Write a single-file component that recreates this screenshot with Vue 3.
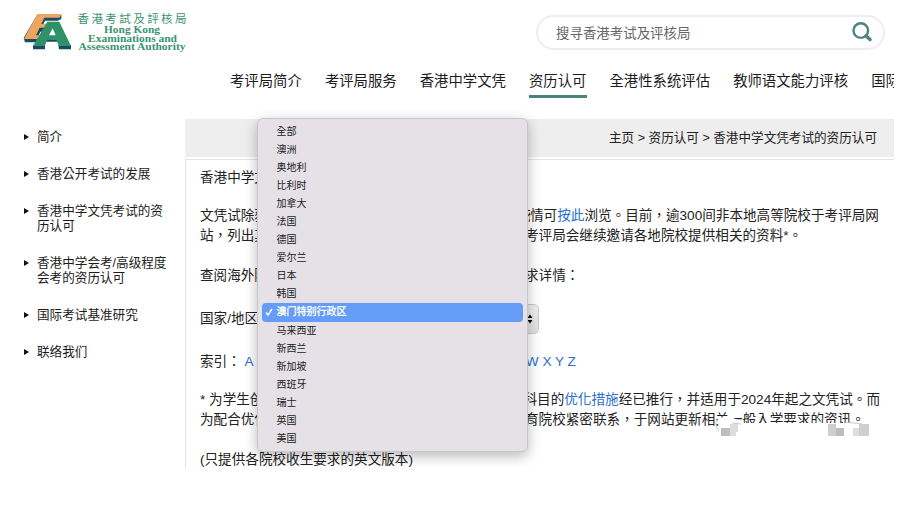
<script setup>
const nav = ['考评局简介', '考评局服务', '香港中学文凭', '资历认可', '全港性系统评估', '教师语文能力评核', '国际']
const side = [
  ['简介'],
  ['香港公开考试的发展'],
  ['香港中学文凭考试的资', '历认可'],
  ['香港中学会考/高级程度', '会考的资历认可'],
  ['国际考试基准研究'],
  ['联络我们']
]
const regions = ['全部', '澳洲', '奥地利', '比利时', '加拿大', '法国', '德国', '爱尔兰', '日本', '韩国', '澳门特别行政区', '马来西亚', '新西兰', '新加坡', '西班牙', '瑞士', '英国', '美国']
const selected = '澳门特别行政区'
const letters = 'ABCDEFGHIJKLMNOPQRSTUVWXYZ'.split('').join(' ')
</script>

<template>
  <div class="page">
    <header class="top">
      <div class="brand">
        <svg class="mark" viewBox="0 0 195 150" width="65" height="50">
          <path fill="#174c63" d="M66 30H139V42L128 47H90L84 60H108L98 80H76L68 98L80 103L66 112H30L26 99Z" />
          <path fill="#f0a55f" d="M67 27H139L134 38H88L79 57H108L102 68H74L63 91H80L74 102H27Z" />
          <path fill="#174c63" d="M54 120H90V133H54ZM130 120H168V133H132ZM94 98H126V110H94Z" />
          <path fill="#2f9168" fill-rule="evenodd" d="M97 50H133L168 123H132L124 105H97L89 123H54ZM113 70L102 91H122Z" />
        </svg>
        <svg class="name" viewBox="0 0 112 44" width="112" height="44">
          <text class="zh" x="0.5" y="13.6" textLength="109" lengthAdjust="spacing">香港考試及評核局</text>
          <text class="en" x="27" y="24.2" textLength="56" lengthAdjust="spacingAndGlyphs">Hong Kong</text>
          <text class="en" x="11" y="33" textLength="89" lengthAdjust="spacingAndGlyphs">Examinations and</text>
          <text class="en" x="1.5" y="41.2" textLength="107" lengthAdjust="spacingAndGlyphs">Assessment Authority</text>
        </svg>
      </div>
      <div class="search">
        <span>搜寻香港考试及评核局</span>
        <svg viewBox="0 0 20 20" width="20" height="20">
          <circle cx="8.8" cy="8.6" r="7.3" fill="none" stroke="#4a837d" stroke-width="2.4" />
          <path d="M14 13.8L18 17.6" stroke="#4a837d" stroke-width="3.4" stroke-linecap="round" />
        </svg>
      </div>
    </header>
    <nav class="nav">
      <a v-for="n in nav" :key="n" :class="{ active: n === '资历认可' }">{{ n }}</a>
    </nav>
    <div class="body">
      <aside class="side">
        <div v-for="s in side" :key="s[0]" class="entry">
          <i></i>
          <div><div v-for="l in s" :key="l">{{ l }}</div></div>
        </div>
      </aside>
      <main class="main">
        <div class="crumbs">主页 &gt; 资历认可 &gt; 香港中学文凭考试的资历认可</div>
        <article class="content">
          <p class="title">香港中学文凭考试的资历认可</p>
          <div class="para">
            <p><span class="lead first">文凭试除获本地专上院校认可外，亦获海外院校承认，有关</span>情可<a>按此</a>浏览。目前，逾300间非本地高等院校于考评局网</p>
            <p><span class="lead">站，列出其对文凭试学生的一般入学要求，供学生参考。而</span>考评局会继续邀请各地院校提供相关的资料*。</p>
          </div>
          <p class="query"><span class="lead">查阅海外院校的一般入学要求，请选择国家或地区以查看要</span>求详情：</p>
          <div class="field">
            <span>国家/地区</span>
            <div class="select"><svg viewBox="0 0 6 10" width="6" height="10"><path d="M0.5 4L3 0.5L5.5 4ZM0.5 6L3 9.5L5.5 6Z" /></svg></div>
          </div>
          <p class="index">索引： <a>{{ letters }}</a></p>
          <div class="para notes">
            <p><span class="lead note">* 为学生创造空间及照顾学生多样性，四个高中核心学科</span>科目的<a>优化措施</a>经已推行，并适用于2024年起之文凭试。而</p>
            <p><span class="lead">为配合优化措施，考评局正与各地政府部门及高等院校教育</span>育院校紧密联系，于网站更新相关一般入学要求的资讯。</p>
            <svg class="smudge" viewBox="0 0 160 34" width="160" height="34">
              <path fill="#fff" d="M4 5Q13 0 24 6L27 9H154V32H5Z" />
              <path fill="none" stroke="#bbb" stroke-width=".8" d="M3 5Q0 11 5 17M18 9L27 10M131 8L148 10" />
              <path fill="#bdbdbd" d="M7 14H16V22H7ZM121 14H130V22H121Z" />
              <path fill="#ddd" d="M16 10H24V18H16ZM16 18H22V22H16ZM139 14H147V22H139Z" />
              <path fill="#cfcfcf" d="M114 10H122V22H114ZM145 10H155V22H145Z" />
            </svg>
          </div>
          <p class="foot">(只提供各院校收生要求的英文版本)</p>
        </article>
      </main>
    </div>
    <ul class="menu">
      <li v-for="r in regions" :key="r" :class="{ on: r === selected }">
        <svg v-if="r === selected" viewBox="0 0 8 8" width="8" height="8"><path d="M1 4.5L3 7L7 1" /></svg>{{ r }}
      </li>
    </ul>
  </div>
</template>

<style>
body { margin: 0; background: #fff; }
</style>

<style scoped>
.page {
  position: relative;
  width: 894px;
  height: 517px;
  overflow: hidden;
  color: #222;
  font-family: "Liberation Sans", "Noto Sans CJK TC", sans-serif;
}
p { margin: 0; white-space: nowrap; }
a { color: #2b6fcb; }
.top { display: flex; justify-content: space-between; height: 62px; padding: 0 9px 0 15px; }
.brand { display: flex; padding-top: 5px; }
.mark { flex: none; }
.name { margin-left: -3px; margin-top: 4px; }
.name text { fill: #3a9470; }
.zh { font: 400 11.5px "Noto Sans CJK TC", sans-serif; }
.en { font: bold 10.4px "Liberation Serif", serif; }
.search {
  display: flex;
  align-items: center;
  justify-content: space-between;
  box-sizing: border-box;
  width: 349px;
  height: 35px;
  margin-top: 15px;
  padding: 0 11px 2px 18px;
  border: 2px solid #eee;
  border-radius: 18px;
  color: #666;
  font-size: 13.45px;
}
.nav {
  display: flex;
  gap: 23px;
  height: 57px;
  padding-left: 230px;
  font-size: 14.38px;
}
.nav a {
  flex: none;
  box-sizing: border-box;
  height: 36px;
  padding-top: 9px;
  line-height: 20px;
  color: #1c1c1c;
}
.nav .active { border-bottom: 3px solid #4a837d; }
.body { display: flex; height: 350px; }
.side {
  box-sizing: border-box;
  width: 185px;
  padding: 11px 0 0 24px;
  display: flex;
  flex-direction: column;
  gap: 22px;
  font-size: 12.6px;
  line-height: 15px;
  color: #1c1c1c;
  white-space: nowrap;
}
.entry { display: flex; gap: 8px; }
.entry i {
  margin-top: 4px;
  border: solid transparent;
  border-width: 3px 0 3px 5px;
  border-left-color: #111;
  height: 0;
}
.main { width: 709px; }
.crumbs {
  height: 38px;
  padding-right: 17px;
  background: #eee;
  font-size: 12.6px;
  line-height: 38px;
  text-align: right;
}
.content {
  box-sizing: border-box;
  height: 310px;
  margin-top: 2px;
  padding: 9px 0 0 14px;
  border-top: 1px solid #e4e4e4;
  border-left: 1px solid #e4e4e4;
  font-size: 13.6px;
  line-height: 20px;
}
.title { line-height: 18px; }
.para { position: relative; margin-top: 19px; }
.lead { display: inline-block; width: 325px; overflow: hidden; vertical-align: top; }
.first { width: 330px; }
.note { width: 323.5px; }
.query { margin-top: 20px; }
.field { display: flex; align-items: center; gap: 8px; height: 30px; margin-top: 18px; }
.select {
  display: flex;
  align-items: center;
  justify-content: flex-end;
  box-sizing: border-box;
  width: 273px;
  height: 30px;
  padding-right: 5px;
  border: 1px solid #c9c9c9;
  border-radius: 5px;
  background: linear-gradient(#f0f0f0, #e1e1e1);
}
.index { margin-top: 18px; }
.notes { margin-top: 18px; }
.smudge { position: absolute; left: 514px; top: 24px; }
.foot { margin-top: 20px; }
.menu {
  position: absolute;
  left: 257px;
  top: 118px;
  box-sizing: border-box;
  width: 271px;
  height: 334px;
  margin: 0;
  padding: 4px 4px 0;
  border: 1px solid #c9c6cb;
  border-radius: 6px;
  background: #e5e1e7;
  box-shadow: 0 4px 13px rgba(0, 0, 0, .28);
  list-style: none;
  font-size: 10px;
  line-height: 18.05px;
}
.menu li { position: relative; height: 18.05px; padding-left: 14.5px; border-radius: 4px; }
.menu .on { background: #659cf8; color: #fff; -webkit-text-stroke: .3px #fff; }
.menu svg { position: absolute; left: 3px; top: 5px; fill: none; stroke: #fff; stroke-width: 1.4; }
</style>
